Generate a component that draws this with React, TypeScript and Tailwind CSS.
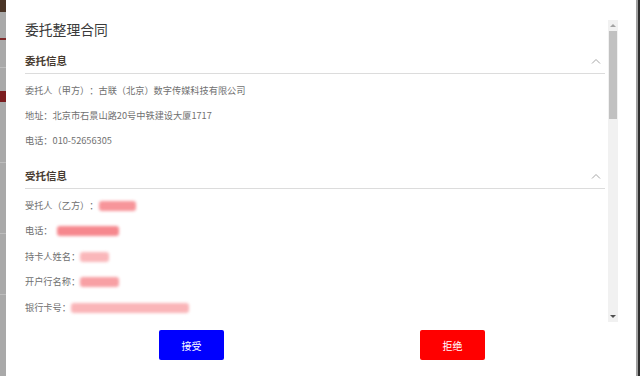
const clientRows = [
  { label: '委托人（甲方）：', value: '古联（北京）数字传媒科技有限公司' },
  { label: '地址：', value: '北京市石景山路20号中铁建设大厦1717' },
  { label: '电话：', value: '010-52656305' },
]

// redacted values are drawn as blurred pink bars
const agentRows = [
  { label: '受托人（乙方）：', bar: 'w-[37px] bg-[#f7959a]' },
  { label: '电话：', bar: 'w-[62px] bg-[#f6888e] ml-[4px]' },
  { label: '持卡人姓名：', bar: 'w-[29px] bg-[#fab7ba]' },
  { label: '开户行名称：', bar: 'w-[39px] bg-[#f8a0a4]' },
  { label: '银行卡号：', bar: 'w-[118px] bg-[#fab5b8]' },
]

function SectionHeader({ title }: { title: string }) {
  return (
    <div className="flex h-[25px] items-center justify-between border-b border-[#dcdcdc] pr-[4px]">
      <span className="text-[10.5px] font-bold text-[#473b30]">{title}</span>
      <svg width="10" height="6" viewBox="0 0 10 6" className="mb-[1px]">
        <polyline points="1,5.5 5,1.5 9,5.5" fill="none" stroke="#a6a6a6" strokeWidth="1" />
      </svg>
    </div>
  )
}

function Scrollbar() {
  return (
    <div className="flex w-[10px] flex-col bg-[#f1f1f1]">
      <div className="flex h-[11px] items-center justify-center">
        <div className="h-0 w-0 border-x-[3px] border-b-[3px] border-x-transparent border-b-[#a3a3a3]" />
      </div>
      <div className="mx-[1px] h-[88px] bg-[#c1c1c1]" />
      <div className="flex-1" />
      <div className="flex h-[11px] items-center justify-center">
        <div className="h-0 w-0 border-x-[3px] border-t-[3px] border-x-transparent border-t-[#505050]" />
      </div>
    </div>
  )
}

export default function App() {
  return (
    <div
      className="flex h-[376px] w-[640px] overflow-hidden bg-[#9b9b9b] [text-spacing-trim:space-all]"
      style={{ fontFamily: '"Noto Sans CJK SC", "Noto Sans", sans-serif' }}
    >
      {/* page behind the overlay */}
      <div className="flex w-[6px] flex-col bg-[#a9a9a9]">
        <div className="h-[12px] bg-[#4b3527]" />
        <div className="mt-[26px] h-[2px] bg-[#7d2a2a]" />
        <div className="mt-[27px] h-px bg-[#bdbdbd]" />
        <div className="mt-[23px] h-[11px] bg-[#7b1d1f]" />
        <div className="mt-[60px] h-px bg-[#bdbdbd]" />
        <div className="mt-[70px] h-px bg-[#bdbdbd]" />
        <div className="mt-[60px] h-px bg-[#bdbdbd]" />
      </div>

      {/* modal */}
      <div className="flex w-[630px] flex-col bg-white">
        <div className="mt-[20px] flex h-[302px]">
          <div className="flex-1 overflow-y-hidden pl-[19px] pr-[3px] pt-px">
            <h1 className="text-[13.8px] leading-[16px] text-[#3a3a3a]">委托整理合同</h1>

            <div className="mt-[12px]">
              <SectionHeader title="委托信息" />
              <div className="pt-[4px]">
                {clientRows.map((r) => (
                  <div key={r.label} className="flex h-[25px] items-center text-[9.2px] text-[#707070]">
                    {r.label}
                    {r.value}
                  </div>
                ))}
              </div>
            </div>

            <div className="mt-[11px]">
              <SectionHeader title="受托信息" />
              <div className="pt-[4px]">
                {agentRows.map((r) => (
                  <div key={r.label} className="flex h-[25.5px] items-center text-[9.2px] text-[#707070]">
                    {r.label}
                    <span className={`h-[10px] rounded-[3px] blur-[1.5px] ${r.bar}`} />
                  </div>
                ))}
              </div>
            </div>
          </div>
          <Scrollbar />
          <div className="w-[18px]" />
        </div>

        <div className="mt-[8px] flex">
          <div className="w-[153px]" />
          <button className="h-[30px] w-[65px] rounded-[2px] bg-[#0000ff] text-[10px] text-white">接受</button>
          <div className="w-[196px]" />
          <button className="h-[30px] w-[65px] rounded-[2px] bg-[#ff0000] text-[10px] text-white">拒绝</button>
        </div>
      </div>

      <div className="flex w-[4px] justify-end bg-[#a0a0a0]">
        <div className="w-[2px] bg-[#2d2d2d]" />
      </div>
    </div>
  )
}
